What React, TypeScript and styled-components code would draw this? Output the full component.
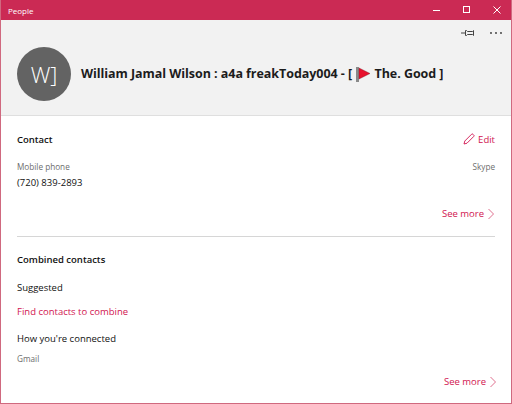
import React from "react"
import styled, { createGlobalStyle } from "styled-components"

const Global = createGlobalStyle`
  html, body { margin: 0; padding: 0; background: #fff; }
  body { font-family: "Open Sans", "Noto Sans", "Liberation Sans", sans-serif; }
`

const Window = styled.div`
  width: 512px;
  height: 404px;
  box-sizing: border-box;
  border: 1px solid #d0697f;
  border-top: 0;
  display: flex;
  flex-direction: column;
  overflow: hidden;
  background: #fff;
`

const TitleBar = styled.div`
  height: 20px;
  flex: none;
  margin: 0 -1px;
  background: #cb2a54;
  color: #fff;
  display: flex;
  align-items: center;
  justify-content: space-between;
  padding-left: 8px;
  font-size: 8px;
`

const WindowButtons = styled.div`
  display: flex;
`

const WindowButton = styled.div`
  width: 30px;
  height: 20px;
  display: flex;
  align-items: center;
  justify-content: center;
`

const Header = styled.header`
  height: 96px;
  flex: none;
  box-sizing: border-box;
  background: #f2f2f2;
  border-bottom: 1px solid #dfdfdf;
  position: relative;
  display: flex;
  align-items: center;
  padding: 12px 16px 0;
  gap: 10px;
`

const HeaderTools = styled.div`
  position: absolute;
  top: 8px;
  right: 8px;
  display: flex;
  align-items: center;
  gap: 14px;
`

const Avatar = styled.div`
  width: 54px;
  height: 54px;
  border-radius: 50%;
  background: #636363;
  color: #fff;
  font-size: 22px;
  font-weight: 300;
  display: flex;
  align-items: center;
  justify-content: center;
  flex: none;
`

const Name = styled.h1`
  margin: 0;
  font-size: 12.5px;
  font-weight: 700;
  letter-spacing: -0.05px;
  color: #1c1c1c;
  white-space: nowrap;
  display: flex;
  align-items: center;
`

const Content = styled.main`
  flex: 1;
  padding: 0 16px;
  display: flex;
  flex-direction: column;
`

const SectionHead = styled.div<{ $top: number }>`
  display: flex;
  justify-content: space-between;
  align-items: center;
  margin-top: ${p => p.$top}px;
  height: 14px;
`

const SectionTitle = styled.h2`
  margin: 0;
  font-size: 9.5px;
  font-weight: 600;
  color: #111;
`

const Action = styled.a`
  color: #d1134f;
  font-size: 9.5px;
  display: flex;
  align-items: center;
  gap: 3px;
`

const Fields = styled.div`
  display: flex;
  justify-content: space-between;
  margin-top: 15px;
`

const Caption = styled.div`
  font-size: 8.2px;
  line-height: 12px;
  color: #6d6d6d;
`

const Value = styled.div`
  font-size: 9.5px;
  line-height: 14px;
  margin-top: 3px;
  color: #111;
`

const MoreRow = styled.div<{ $top: number; $inset: number }>`
  display: flex;
  justify-content: flex-end;
  margin-top: ${p => p.$top}px;
  margin-right: ${p => p.$inset}px;
`

const Divider = styled.hr`
  border: 0;
  height: 1px;
  background: #d6d6d6;
  margin: 16px 0 0;
`

const Line = styled.div<{ $top: number }>`
  font-size: 9.5px;
  line-height: 14px;
  margin-top: ${p => p.$top}px;
  color: #111;
`

const LinkLine = styled(Line)`
  color: #d1134f;
`

const CaptionLine = styled(Caption)<{ $top: number }>`
  margin-top: ${p => p.$top}px;
`

const Chevron = () => (
  <svg width="8" height="12" viewBox="0 0 8 12" fill="none" stroke="#e0708f" strokeWidth="1">
    <path d="M1.5 1l5 5-5 5" />
  </svg>
)

const SeeMore = () => (
  <Action>
    See more
    <Chevron />
  </Action>
)

export default function App() {
  return (
    <Window>
      <Global />
      <TitleBar>
        People
        <WindowButtons>
          <WindowButton>
            <svg width="8" height="8" viewBox="0 0 8 8" stroke="#fff" fill="none"><path d="M0 4.5h7" /></svg>
          </WindowButton>
          <WindowButton>
            <svg width="8" height="8" viewBox="0 0 8 8" stroke="#fff" fill="none"><rect x=".5" y=".5" width="6" height="6" /></svg>
          </WindowButton>
          <WindowButton>
            <svg width="8" height="8" viewBox="0 0 8 8" stroke="#fff" fill="none"><path d="M.5.5l7 7M7.5.5l-7 7" /></svg>
          </WindowButton>
        </WindowButtons>
      </TitleBar>
      <Header>
        <HeaderTools>
          <svg width="14" height="10" viewBox="0 0 14 10" fill="none" stroke="#444" strokeWidth="1">
            <path d="M0 5h4M4.5 2.5h1l1 1h5l1-1v5l-1-1h-5l-1 1h-1z" />
          </svg>
          <svg width="14" height="4" viewBox="0 0 14 4" fill="#333">
            <circle cx="2" cy="2" r=".9" />
            <circle cx="7" cy="2" r=".9" />
            <circle cx="12" cy="2" r=".9" />
          </svg>
        </HeaderTools>
        <Avatar>W]</Avatar>
        <Name>
          William Jamal Wilson : a4a freakToday004 - [&nbsp;
          <svg width="16" height="16" viewBox="0 0 16 16">
            <rect x="1" y="1" width="3" height="15" fill="#8a8a8a" />
            <path d="M4 2l11 5.5L4 13z" fill="#e8112d" stroke="#7a1020" strokeWidth=".4" />
          </svg>
          &nbsp;The. Good ]
        </Name>
      </Header>
      <Content>
        <SectionHead $top={16}>
          <SectionTitle>Contact</SectionTitle>
          <Action>
            <svg width="12" height="12" viewBox="0 0 12 12" fill="none" stroke="#d1134f" strokeWidth=".9">
              <path d="M1 11l.8-3L8.5 1.3a1 1 0 0 1 1.5 0l.7.7a1 1 0 0 1 0 1.5L4 10.2z" />
            </svg>
            Edit
          </Action>
        </SectionHead>
        <Fields>
          <div>
            <Caption>Mobile phone</Caption>
            <Value>(720) 839-2893</Value>
          </div>
          <Caption>Skype</Caption>
        </Fields>
        <MoreRow $top={17} $inset={0}>
          <SeeMore />
        </MoreRow>
        <Divider />
        <SectionHead $top={15}>
          <SectionTitle>Combined contacts</SectionTitle>
        </SectionHead>
        <Line $top={15}>Suggested</Line>
        <LinkLine $top={10}>Find contacts to combine</LinkLine>
        <Line $top={13}>How you're connected</Line>
        <CaptionLine $top={7}>Gmail</CaptionLine>
        <MoreRow $top={10} $inset={-2}>
          <SeeMore />
        </MoreRow>
      </Content>
    </Window>
  )
}
